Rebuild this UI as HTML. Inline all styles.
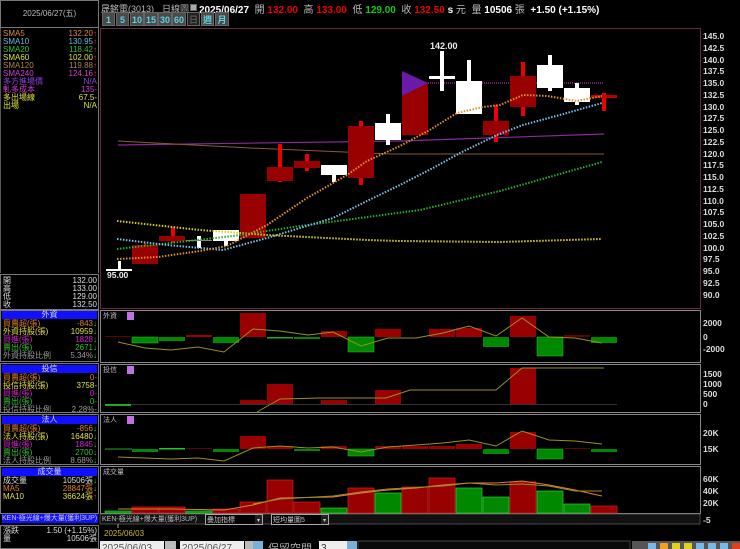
<!DOCTYPE html>
<html><head><meta charset="utf-8">
<style>
*{margin:0;padding:0;box-sizing:border-box}
body{width:740px;height:549px;background:#000;overflow:hidden;position:relative;font-family:"Liberation Sans","Noto Sans CJK TC",sans-serif;}
.a{position:absolute;white-space:nowrap}
.s{font-size:8px;line-height:8px}
.btn{position:absolute;top:12px;height:14px;background:#4a4a4a;color:#5fd0e0;font-size:9px;font-weight:bold;text-align:center;line-height:14px;border:1px solid #666}
</style></head><body>

<!-- left top date box -->
<div class="a" style="left:0;top:0;width:99px;height:28px;border:1px solid #777;color:#bbb;font-size:8px;text-align:center;line-height:26px;">2025/06/27(五)</div>
<div class="a" style="left:0;top:28px;width:99px;height:245px;border-left:1px solid #555;border-right:1px solid #777;"></div>

<div class="a s" style="left:3px;top:30px;">
<div style="color:#d88a3a">SMA5</div><div style="color:#6ab8e0">SMA10</div><div style="color:#30c030">SMA20</div><div style="color:#e0e040">SMA60</div><div style="color:#b08050">SMA120</div><div style="color:#d040d0">SMA240</div><div style="color:#9040e0">多方進場價</div><div style="color:#d040d0">軋多成本</div><div style="color:#e0e040">多出場線</div><div style="color:#e0e040">出場</div>
</div>
<div class="a s" style="right:643px;top:30px;text-align:right;">
<div style="color:#d88a3a">132.20<span style="color:#f22">↑</span></div><div style="color:#6ab8e0">130.95<span style="color:#f22">↑</span></div><div style="color:#30c030">118.42<span style="color:#f22">↑</span></div><div style="color:#e0e040">102.00<span style="color:#f22">↑</span></div><div style="color:#b08050">119.88<span style="color:#f22">↑</span></div><div style="color:#d040d0">124.16<span style="color:#f22">↑</span></div><div style="color:#9040e0">N/A</div><div style="color:#d040d0">135-</div><div style="color:#e0e040">67.5-</div><div style="color:#e0e040">N/A</div>
</div>

<!-- OHLC box -->
<div class="a" style="left:0;top:274px;width:99px;height:36px;border:1px solid #777;"></div>
<div class="a s" style="left:3px;top:277px;color:#ddd"><div>開</div><div>高</div><div>低</div><div>收</div></div>
<div class="a s" style="right:643px;top:277px;color:#ddd;text-align:right"><div>132.00</div><div>133.00</div><div>129.00</div><div>132.50</div></div>

<!-- 外資 -->
<div class="a" style="left:0;top:310px;width:99px;height:52px;border:1px solid #777;"></div>
<div class="a" style="left:2px;top:311px;width:95px;height:8px;background:#1010ff;color:#ddd;font-size:8px;line-height:8px;text-align:center">外資</div>
<div class="a s" style="left:3px;top:320px;"><div style="color:#e08020">買賣超(張)</div><div style="color:#e0e040">外資持股(張)</div><div style="color:#d020d0">買進(張)</div><div style="color:#30c030">賣出(張)</div><div style="color:#999">外資持股比例</div></div>
<div class="a s" style="right:643px;top:320px;text-align:right"><div style="color:#e08020">-843<span style="color:#2c2">↓</span></div><div style="color:#e0e040">10959<span style="color:#2c2">↓</span></div><div style="color:#d020d0">1828<span style="color:#2c2">↓</span></div><div style="color:#30c030">2671<span style="color:#2c2">↓</span></div><div style="color:#999">5.34%<span style="color:#2c2">↓</span></div></div>

<!-- 投信 -->
<div class="a" style="left:0;top:363px;width:99px;height:50px;border:1px solid #777;"></div>
<div class="a" style="left:2px;top:365px;width:95px;height:8px;background:#1010ff;color:#ddd;font-size:8px;line-height:8px;text-align:center">投信</div>
<div class="a s" style="left:3px;top:374px;"><div style="color:#e08020">買賣超(張)</div><div style="color:#e0e040">投信持股(張)</div><div style="color:#d020d0">買進(張)</div><div style="color:#30c030">賣出(張)</div><div style="color:#999">投信持股比例</div></div>
<div class="a s" style="right:643px;top:374px;text-align:right"><div style="color:#e08020">0-</div><div style="color:#e0e040">3758-</div><div style="color:#d020d0">0-</div><div style="color:#30c030">0-</div><div style="color:#999">2.28%-</div></div>

<!-- 法人 -->
<div class="a" style="left:0;top:414px;width:99px;height:51px;border:1px solid #777;"></div>
<div class="a" style="left:2px;top:416px;width:95px;height:8px;background:#1010ff;color:#ddd;font-size:8px;line-height:8px;text-align:center">法人</div>
<div class="a s" style="left:3px;top:425px;"><div style="color:#e08020">買賣超(張)</div><div style="color:#e0e040">法人持股(張)</div><div style="color:#d020d0">買進(張)</div><div style="color:#30c030">賣出(張)</div><div style="color:#999">法人持股比例</div></div>
<div class="a s" style="right:643px;top:425px;text-align:right"><div style="color:#e08020">-856<span style="color:#2c2">↓</span></div><div style="color:#e0e040">16480<span style="color:#2c2">↓</span></div><div style="color:#d020d0">1845<span style="color:#2c2">↓</span></div><div style="color:#30c030">2700<span style="color:#2c2">↓</span></div><div style="color:#999">8.68%<span style="color:#2c2">↓</span></div></div>

<!-- 成交量 -->
<div class="a" style="left:0;top:466px;width:99px;height:48px;border:1px solid #777;"></div>
<div class="a" style="left:2px;top:468px;width:95px;height:8px;background:#1010ff;color:#ddd;font-size:8px;line-height:8px;text-align:center">成交量</div>
<div class="a s" style="left:3px;top:477px;"><div style="color:#ddd">成交量</div><div style="color:#e08020">MA5</div><div style="color:#e0e040">MA10</div></div>
<div class="a s" style="right:643px;top:477px;text-align:right"><div style="color:#ddd">10506張<span style="color:#2c2">↓</span></div><div style="color:#e08020">28847張<span style="color:#2c2">↓</span></div><div style="color:#e0e040">36624張<span style="color:#f22">↑</span></div></div>

<div class="a" style="left:2px;top:514px;width:96px;height:9px;background:#1010ff;color:#ccc;font-size:7px;line-height:9px;">KEN-極光線+爆大量(獲利3UP)</div>
<div class="a" style="left:0;top:525px;width:99px;height:24px;border:1px solid #777;"></div>
<div class="a s" style="left:3px;top:527px;color:#ddd"><div>漲跌</div><div>量</div></div>
<div class="a s" style="right:643px;top:527px;color:#ddd;text-align:right"><div>1.50 (+1.15%)</div><div>10506張</div></div>

<!-- top bar -->
<div class="a" style="left:101px;top:2px;font-size:9px;color:#bbb;">晟銘電(3013)</div>
<div class="a" style="left:162px;top:2px;font-size:9px;color:#bbb;">日線圖</div>
<div class="a" style="left:190px;top:4px;width:7px;height:7px;background:#aaa;border:1px solid #666"></div>
<div class="a" style="left:199px;top:1px;font-size:10px;font-weight:bold;color:#fff;">2025/06/27 <span style="color:#bbb;font-weight:normal">&nbsp;開</span> <span style="color:#e00">132.00</span> <span style="color:#bbb;font-weight:normal">&nbsp;高</span> <span style="color:#e00">133.00</span> <span style="color:#bbb;font-weight:normal">&nbsp;低</span> <span style="color:#1c1">129.00</span> <span style="color:#bbb;font-weight:normal">&nbsp;收</span> <span style="color:#e00">132.50</span> s <span style="color:#bbb;font-weight:normal">元 &nbsp;量</span> 10506 <span style="color:#bbb;font-weight:normal">張</span> &nbsp;+1.50 (+1.15%)</div>

<div class="btn" style="left:102px;width:13px">1</div>
<div class="btn" style="left:116px;width:13px">5</div>
<div class="btn" style="left:130px;width:14px">10</div>
<div class="btn" style="left:144px;width:14px">15</div>
<div class="btn" style="left:158px;width:14px">30</div>
<div class="btn" style="left:172px;width:14px">60</div>
<div class="btn" style="left:187px;width:13px;background:#222;color:#555">日</div>
<div class="btn" style="left:201px;width:13px">週</div>
<div class="btn" style="left:215px;width:14px">月</div>

<svg class="a" style="left:0;top:0" width="740" height="549" font-family="Liberation Sans, Noto Sans CJK TC, sans-serif">
<!-- main chart frame -->
<rect x="100.5" y="28.5" width="600" height="280" fill="none" stroke="#6a2a3a"/>
<g fill="#ddd" font-size="8.5" font-weight="bold">
<text x="703" y="39">145.0</text><text x="703" y="51">142.5</text><text x="703" y="63">140.0</text><text x="703" y="74">137.5</text><text x="703" y="86">135.0</text><text x="703" y="98">132.5</text><text x="703" y="110">130.0</text><text x="703" y="121">127.5</text><text x="703" y="133">125.0</text><text x="703" y="145">122.5</text><text x="703" y="157">120.0</text><text x="703" y="168">117.5</text><text x="703" y="180">115.0</text><text x="703" y="192">112.5</text><text x="703" y="204">110.0</text><text x="703" y="215">107.5</text><text x="703" y="227">105.0</text><text x="703" y="239">102.5</text><text x="703" y="251">100.0</text><text x="703" y="262">97.5</text><text x="703" y="274">95.0</text><text x="703" y="286">92.5</text><text x="703" y="298">90.0</text>
</g>
<!-- long MAs -->
<polyline points="118,145 400,141 604,134" fill="none" stroke="#8a2a9a" stroke-width="1.2"/>
<polyline points="118,141 250,148 390,154 604,154" fill="none" stroke="#8a5a3a" stroke-width="1"/>
<line x1="402" y1="83" x2="604" y2="83" stroke="#e040e0" stroke-dasharray="1,1"/>
<!-- candles -->
<g>
<rect x="118" y="261" width="3" height="10" fill="#fff"/><rect x="106" y="269" width="26" height="2" fill="#fff"/>
<rect x="132" y="245" width="26" height="19" fill="#900"/><rect x="144" y="243" width="2" height="3" fill="#e00"/>
<rect x="171" y="227" width="4" height="16" fill="#e00"/><rect x="159" y="236" width="26" height="5" fill="#900"/>
<rect x="197" y="236" width="4" height="12" fill="#fff"/><rect x="186" y="240" width="26" height="1" fill="#888"/>
<rect x="224" y="230" width="4" height="16" fill="#fff"/><rect x="213" y="230" width="26" height="11" fill="#fff"/>
<rect x="240" y="194" width="26" height="44" fill="#900"/>
<rect x="278" y="144" width="4" height="38" fill="#e00"/><rect x="267" y="167" width="26" height="14" fill="#900"/>
<rect x="305" y="154" width="4" height="17" fill="#e00"/><rect x="294" y="161" width="26" height="7" fill="#900"/>
<rect x="332" y="165" width="4" height="17" fill="#fff"/><rect x="321" y="165" width="26" height="10" fill="#fff"/>
<rect x="359" y="121" width="4" height="64" fill="#e00"/><rect x="348" y="126" width="26" height="52" fill="#900"/>
<rect x="386" y="114" width="4" height="31" fill="#fff"/><rect x="375" y="123" width="26" height="17" fill="#fff"/>
<rect x="402" y="83" width="26" height="52" fill="#900"/><polygon points="402,71 428,83 402,96" fill="#6a1aa8"/>
<rect x="440" y="51" width="4" height="40" fill="#fff"/><rect x="429" y="76" width="26" height="3" fill="#fff"/>
<text x="430" y="49" fill="#eee" font-size="9" font-weight="bold">142.00</text>
<rect x="467" y="60" width="4" height="30" fill="#fff"/><rect x="456" y="81" width="26" height="33" fill="#fff"/>
<rect x="494" y="105" width="4" height="37" fill="#e00"/><rect x="483" y="121" width="26" height="14" fill="#900"/>
<rect x="521" y="62" width="4" height="54" fill="#e00"/><rect x="510" y="76" width="26" height="31" fill="#900"/>
<rect x="548" y="55" width="4" height="36" fill="#fff"/><rect x="537" y="65" width="26" height="23" fill="#fff"/>
<rect x="575" y="83" width="4" height="22" fill="#fff"/><rect x="564" y="88" width="26" height="14" fill="#fff"/>
<rect x="602" y="93" width="4" height="18" fill="#e00"/><rect x="591" y="95" width="26" height="3" fill="#b00"/>
</g>
<text x="107" y="278" fill="#eee" font-size="8.5" font-weight="bold">95.00</text>
<!-- MAs dotted -->
<g fill="none" stroke-width="2" stroke-dasharray="1.5,1.5">
<polyline stroke="#d8d020" points="117,221 200,230 267,235 367,240 400,241 500,242 567,240 602,239"/>
<polyline stroke="#28b028" points="117,249 233,236 300,226 420,210 500,191 602,162"/>
<polyline stroke="#7ac0e8" points="117,239 167,245 223,250 267,238 333,218 367,201 400,185 433,168 460,153 497,135 523,125 567,113 602,103"/>
<polyline stroke="#e09030" points="117,259 158,257 200,251 227,246 267,225 307,198 347,175 367,161 400,146 428,131 457,113 483,107 500,105 523,95 547,96 577,101 602,96"/>
</g>

<!-- 外資 panel -->
<rect x="100.5" y="310.5" width="600" height="52" fill="none" stroke="#888"/>
<text x="103" y="318" fill="#bbb" font-size="7">外資</text><rect x="127" y="312" width="7" height="8" fill="#c070e0"/>
<g fill="#ddd" font-size="8.5" font-weight="bold"><text x="703" y="326">2000</text><text x="703" y="340">0</text><text x="703" y="352">-2000</text></g>
<g>
<rect x="105" y="336" width="26" height="1" fill="#600"/>
<rect x="132" y="337" width="26" height="6" fill="#080" stroke="#2c2" stroke-width=".5"/>
<rect x="159" y="337" width="26" height="4" fill="#080"/>
<rect x="186" y="335" width="26" height="2" fill="#900"/>
<rect x="213" y="337" width="26" height="6" fill="#080"/>
<rect x="240" y="313" width="26" height="24" fill="#900"/>
<rect x="267" y="337" width="26" height="1.5" fill="#2a2"/>
<rect x="294" y="337" width="26" height="2" fill="#080"/>
<rect x="321" y="331" width="26" height="6" fill="#900"/>
<rect x="348" y="337" width="26" height="15" fill="#080" stroke="#2c2" stroke-width=".5"/>
<rect x="375" y="329" width="26" height="8" fill="#900"/>
<rect x="429" y="329" width="26" height="8" fill="#900"/>
<rect x="456" y="328" width="26" height="9" fill="#900"/>
<rect x="483" y="337" width="26" height="10" fill="#080"/>
<rect x="510" y="316" width="26" height="21" fill="#900"/>
<rect x="537" y="337" width="26" height="19" fill="#080" stroke="#2c2" stroke-width=".5"/>
<rect x="564" y="335" width="26" height="2" fill="#600"/>
<rect x="591" y="337" width="26" height="6" fill="#080"/>
</g>
<polyline fill="none" stroke="#9a9020" points="118,342 145,348 171,350 198,347 224,352 253,329 280,331 308,335 333,332 361,346 388,338 416,338 443,333 469,326 496,336 522,318 549,337 575,338 602,343"/>

<!-- 投信 panel -->
<rect x="100.5" y="364.5" width="600" height="48" fill="none" stroke="#888"/>
<text x="103" y="372" fill="#bbb" font-size="7">投信</text><rect x="127" y="366" width="7" height="8" fill="#c070e0"/>
<g fill="#ddd" font-size="8.5" font-weight="bold"><text x="703" y="377">1500</text><text x="703" y="387">1000</text><text x="703" y="397">500</text><text x="703" y="407">0</text></g>
<rect x="105" y="404" width="26" height="2" fill="#2a2"/>
<line x1="131" y1="404.5" x2="617" y2="404.5" stroke="#333"/>
<rect x="240" y="400" width="26" height="4" fill="#900"/>
<rect x="267" y="384" width="26" height="20" fill="#900"/>
<rect x="321" y="400" width="26" height="4" fill="#900"/>
<rect x="375" y="390" width="26" height="14" fill="#900"/>
<rect x="510" y="368" width="26" height="36" fill="#900"/>
<polyline fill="none" stroke="#9a9020" points="257,412 280,399 320,398 386,398 410,390 496,390 522,368 604,368"/>

<!-- 法人 panel -->
<rect x="100.5" y="414.5" width="600" height="50" fill="none" stroke="#888"/>
<text x="103" y="422" fill="#bbb" font-size="7">法人</text><rect x="127" y="416" width="7" height="8" fill="#c070e0"/>
<g fill="#ddd" font-size="8.5" font-weight="bold"><text x="703" y="436">20K</text><text x="703" y="452">15K</text></g>
<line x1="105" y1="449" x2="132" y2="449" stroke="#2a2"/>
<rect x="132" y="449" width="26" height="3" fill="#080"/>
<rect x="159" y="448" width="26" height="1.5" fill="#2c2"/>
<rect x="186" y="448" width="26" height="1" fill="#600"/>
<rect x="213" y="449" width="26" height="3" fill="#080"/>
<rect x="240" y="436" width="26" height="13" fill="#900"/>
<rect x="267" y="446" width="26" height="3" fill="#900"/>
<rect x="294" y="449" width="26" height="2" fill="#080"/>
<rect x="321" y="446" width="26" height="3" fill="#900"/>
<rect x="348" y="449" width="26" height="7" fill="#080" stroke="#2c2" stroke-width=".5"/>
<rect x="375" y="446" width="26" height="3" fill="#900"/>
<rect x="402" y="446" width="26" height="3" fill="#900"/>
<rect x="429" y="446" width="26" height="3" fill="#900"/>
<rect x="456" y="444" width="26" height="5" fill="#900"/>
<rect x="483" y="449" width="26" height="5" fill="#080"/>
<rect x="510" y="432" width="26" height="17" fill="#900"/>
<rect x="537" y="449" width="26" height="10" fill="#080" stroke="#2c2" stroke-width=".5"/>
<rect x="564" y="448" width="26" height="1" fill="#600"/>
<rect x="591" y="449" width="26" height="3" fill="#080"/>
<polyline fill="none" stroke="#9a9020" points="118,457 145,458 171,459 198,458 224,461 253,448 280,446 308,448 333,447 361,452 388,447 416,445 443,443 469,440 496,446 522,431 549,440 575,441 602,444"/>

<!-- 成交量 panel -->
<rect x="100.5" y="466.5" width="600" height="47" fill="none" stroke="#888"/>
<text x="103" y="474" fill="#bbb" font-size="7">成交量</text>
<g fill="#ddd" font-size="8.5" font-weight="bold"><text x="703" y="482">60K</text><text x="703" y="494">40K</text><text x="703" y="506">20K</text></g>
<g stroke-width=".7">
<rect x="105" y="511" width="26" height="2" fill="#080" stroke="#3c3"/>
<rect x="132" y="507" width="26" height="6" fill="#900" stroke="#c22"/>
<rect x="159" y="507" width="26" height="6" fill="#900" stroke="#c22"/>
<rect x="186" y="511" width="26" height="2" fill="#080" stroke="#3c3"/>
<rect x="213" y="509" width="26" height="4" fill="#900" stroke="#c22"/>
<rect x="240" y="502" width="26" height="11" fill="#900" stroke="#c22"/>
<rect x="267" y="480" width="26" height="33" fill="#900" stroke="#c22"/>
<rect x="294" y="502" width="26" height="11" fill="#900" stroke="#c22"/>
<rect x="321" y="508" width="26" height="5" fill="#080" stroke="#3c3"/>
<rect x="348" y="488" width="26" height="25" fill="#900" stroke="#c22"/>
<rect x="375" y="493" width="26" height="20" fill="#080" stroke="#3c3"/>
<rect x="402" y="487" width="26" height="26" fill="#900" stroke="#c22"/>
<rect x="429" y="478" width="26" height="35" fill="#900" stroke="#c22"/>
<rect x="456" y="488" width="26" height="25" fill="#080" stroke="#3c3"/>
<rect x="483" y="497" width="26" height="16" fill="#080" stroke="#3c3"/>
<rect x="510" y="482" width="26" height="31" fill="#900" stroke="#c22"/>
<rect x="537" y="491" width="26" height="22" fill="#080" stroke="#3c3"/>
<rect x="564" y="504" width="26" height="9" fill="#080" stroke="#3c3"/>
<rect x="591" y="506" width="26" height="7" fill="#900" stroke="#c22"/>
</g>
<polyline fill="none" stroke="#e08030" points="118,509 171,509 224,510 253,505 280,498 333,497 361,493 388,490 416,488 443,485 469,483 496,483 522,481 549,485 575,490 602,496"/>
<polyline fill="none" stroke="#9a9020" points="253,504 280,499 333,496 361,492 388,489 443,486 469,483 496,485 522,484 549,486 575,491 602,491"/>

<!-- bottom control row -->
<rect x="100" y="514" width="600" height="10" fill="#111" stroke="#666" stroke-width=".7"/>
<text x="102" y="521" fill="#bbb" font-size="7">KEN-極光線+爆大量(獲利3UP)</text>
<rect x="205.5" y="514.5" width="57" height="10" fill="#000" stroke="#aaa"/>
<text x="207" y="522" fill="#ccc" font-size="7">疊加指標</text><rect x="255" y="515" width="7" height="9" fill="#222"/><text x="257" y="522" fill="#ccc" font-size="6">▾</text>
<rect x="271.5" y="514.5" width="57" height="10" fill="#000" stroke="#aaa"/>
<text x="273" y="522" fill="#ccc" font-size="7">短均量圖5</text><rect x="321" y="515" width="7" height="9" fill="#222"/><text x="323" y="522" fill="#ccc" font-size="6">▾</text>
<text x="703" y="523" fill="#ddd" font-size="8.5" font-weight="bold">-5</text>
<line x1="118" y1="524" x2="118" y2="528" stroke="#aa9"/>
<text x="104" y="536" fill="#c8b830" font-size="8">2025/06/03</text>

<!-- input row -->
<rect x="100" y="541" width="64" height="9" fill="#eee"/><text x="102" y="551" fill="#555" font-size="10">2025/06/03</text>
<rect x="165" y="541" width="11" height="9" fill="#bbb"/>
<text x="170" y="549" fill="#ccc" font-size="8">~</text>
<rect x="180" y="541" width="64" height="9" fill="#eee"/><text x="182" y="551" fill="#555" font-size="10">2025/06/27</text>
<rect x="245" y="541" width="8" height="9" fill="#bbb"/><rect x="253" y="541" width="10" height="9" fill="#7ab0d8"/>
<text x="268" y="552" fill="#aaa" font-size="11">保留空間</text>
<rect x="319" y="541" width="28" height="9" fill="#eee"/><text x="321" y="551" fill="#333" font-size="10">3</text>
<rect x="347" y="541" width="10" height="9" fill="#7ab0d8"/>
<rect x="358" y="541" width="272" height="9" fill="#0a0a0a" stroke="#444"/>
<rect x="632" y="541" width="108" height="9" fill="#555"/>
<g fill="#7ab8e8">
<rect x="648" y="543" width="8" height="7"/><rect x="660" y="543" width="8" height="7" fill="#f0a020"/><rect x="672" y="543" width="8" height="7" fill="#e0d020"/><rect x="684" y="543" width="8" height="7" fill="#e0d020"/><rect x="696" y="543" width="8" height="7"/><rect x="708" y="543" width="8" height="7"/><rect x="720" y="543" width="8" height="7"/><rect x="732" y="543" width="8" height="7" fill="#e04020"/>
</g>
</svg>
</body></html>
